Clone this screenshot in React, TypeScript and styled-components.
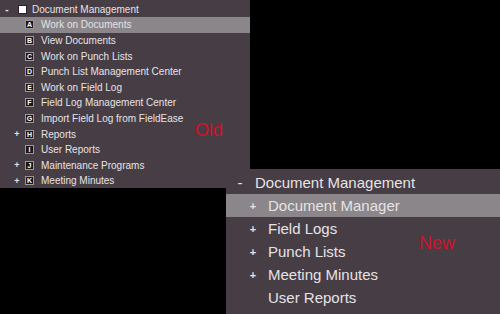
import React from "react";
import styled, { createGlobalStyle } from "styled-components";

const GlobalStyle = createGlobalStyle`
  html, body {
    margin: 0;
    padding: 0;
    background: #000;
  }
  body {
    width: 500px;
    height: 314px;
    overflow: hidden;
    font-family: "Liberation Sans", Arial, sans-serif;
  }
`;

const StyledPage = styled("div")`
  width: 500px;
  height: 314px;
  display: flex;
  flex-direction: column;
  background: #000;
`;

const StyledPanel = styled("div")<{ $w: number; $h: number; $pad: number }>`
  position: relative;
  box-sizing: border-box;
  width: ${(p) => p.$w}px;
  height: ${(p) => p.$h}px;
  padding-top: ${(p) => p.$pad}px;
  background: #463d45;
  display: flex;
  flex-direction: column;
`;

const StyledNewPanel = styled(StyledPanel)`
  align-self: flex-end;
  margin-top: -19px;
`;

const StyledRow = styled("div")<{ $h: number; $indent: number; $size: number; $active?: boolean }>`
  display: flex;
  align-items: center;
  flex: none;
  height: ${(p) => p.$h}px;
  padding-left: ${(p) => p.$indent}px;
  font-size: ${(p) => p.$size}px;
  color: #e6e3e6;
  background: ${(p) => (p.$active ? "#8b868a" : "transparent")};
  white-space: nowrap;
`;

const StyledToggle = styled("span")<{ $size: number; $bold?: boolean }>`
  width: 14px;
  flex: none;
  text-align: center;
  font-size: ${(p) => p.$size}px;
  font-weight: ${(p) => (p.$bold ? 700 : 400)};
  color: #e6e3e6;
`;

const StyledCheck = styled("span")`
  width: 9px;
  height: 9px;
  margin-left: 4px;
  margin-right: 5px;
  background: #fff;
  box-sizing: border-box;
  border: 1px solid #2a2228;
`;

const StyledBadge = styled("span")`
  width: 9px;
  height: 9px;
  box-sizing: border-box;
  margin-left: 1px;
  margin-right: 7px;
  background: #1c161a;
  border: 1px solid #9d979c;
  color: #fff;
  font-size: 7px;
  font-weight: 700;
  line-height: 7px;
  text-align: center;
`;

const StyledLabel = styled("span")<{ $gap?: number }>`
  margin-left: ${(p) => p.$gap ?? 0}px;
`;

const StyledTag = styled("span")<{ $x: number; $y: number }>`
  position: absolute;
  left: ${(p) => p.$x}px;
  top: ${(p) => p.$y}px;
  color: #d3112a;
  font-size: 18px;
  line-height: 1;
`;

const oldItems = [
  { key: "A", label: "Work on Documents", active: true },
  { key: "B", label: "View Documents" },
  { key: "C", label: "Work on Punch Lists" },
  { key: "D", label: "Punch List Management Center" },
  { key: "E", label: "Work on Field Log" },
  { key: "F", label: "Field Log Management Center" },
  { key: "G", label: "Import Field Log from FieldEase" },
  { key: "H", label: "Reports", plus: true },
  { key: "I", label: "User Reports" },
  { key: "J", label: "Maintenance Programs", plus: true },
  { key: "K", label: "Meeting Minutes", plus: true },
];

const newItems = [
  { label: "Document Manager", plus: true, active: true },
  { label: "Field Logs", plus: true },
  { label: "Punch Lists", plus: true },
  { label: "Meeting Minutes", plus: true },
  { label: "User Reports" },
];

const App: React.FC = () => {
  return (
    <StyledPage>
      <GlobalStyle />
      <StyledPanel $w={250} $h={188} $pad={1.5}>
        <StyledRow $h={15.6} $indent={0} $size={10}>
          <StyledToggle $size={10} $bold>-</StyledToggle>
          <StyledCheck />
          <StyledLabel>Document Management</StyledLabel>
        </StyledRow>
        {oldItems.map((item) => (
          <StyledRow key={item.key} $h={15.6} $indent={10} $size={10} $active={item.active}>
            <StyledToggle $size={9} $bold>{item.plus ? "+" : ""}</StyledToggle>
            <StyledBadge>{item.key}</StyledBadge>
            <StyledLabel>{item.label}</StyledLabel>
          </StyledRow>
        ))}
        <StyledTag $x={195} $y={121}>Old</StyledTag>
      </StyledPanel>
      <StyledNewPanel $w={274} $h={145} $pad={2}>
        <StyledRow $h={23} $indent={7} $size={15}>
          <StyledToggle $size={15}>-</StyledToggle>
          <StyledLabel $gap={8}>Document Management</StyledLabel>
        </StyledRow>
        {newItems.map((item) => (
          <StyledRow key={item.label} $h={23} $indent={20} $size={15} $active={item.active}>
            <StyledToggle $size={11} $bold>{item.plus ? "+" : ""}</StyledToggle>
            <StyledLabel $gap={8}>{item.label}</StyledLabel>
          </StyledRow>
        ))}
        <StyledTag $x={193} $y={65}>New</StyledTag>
      </StyledNewPanel>
    </StyledPage>
  );
};

export default App;
